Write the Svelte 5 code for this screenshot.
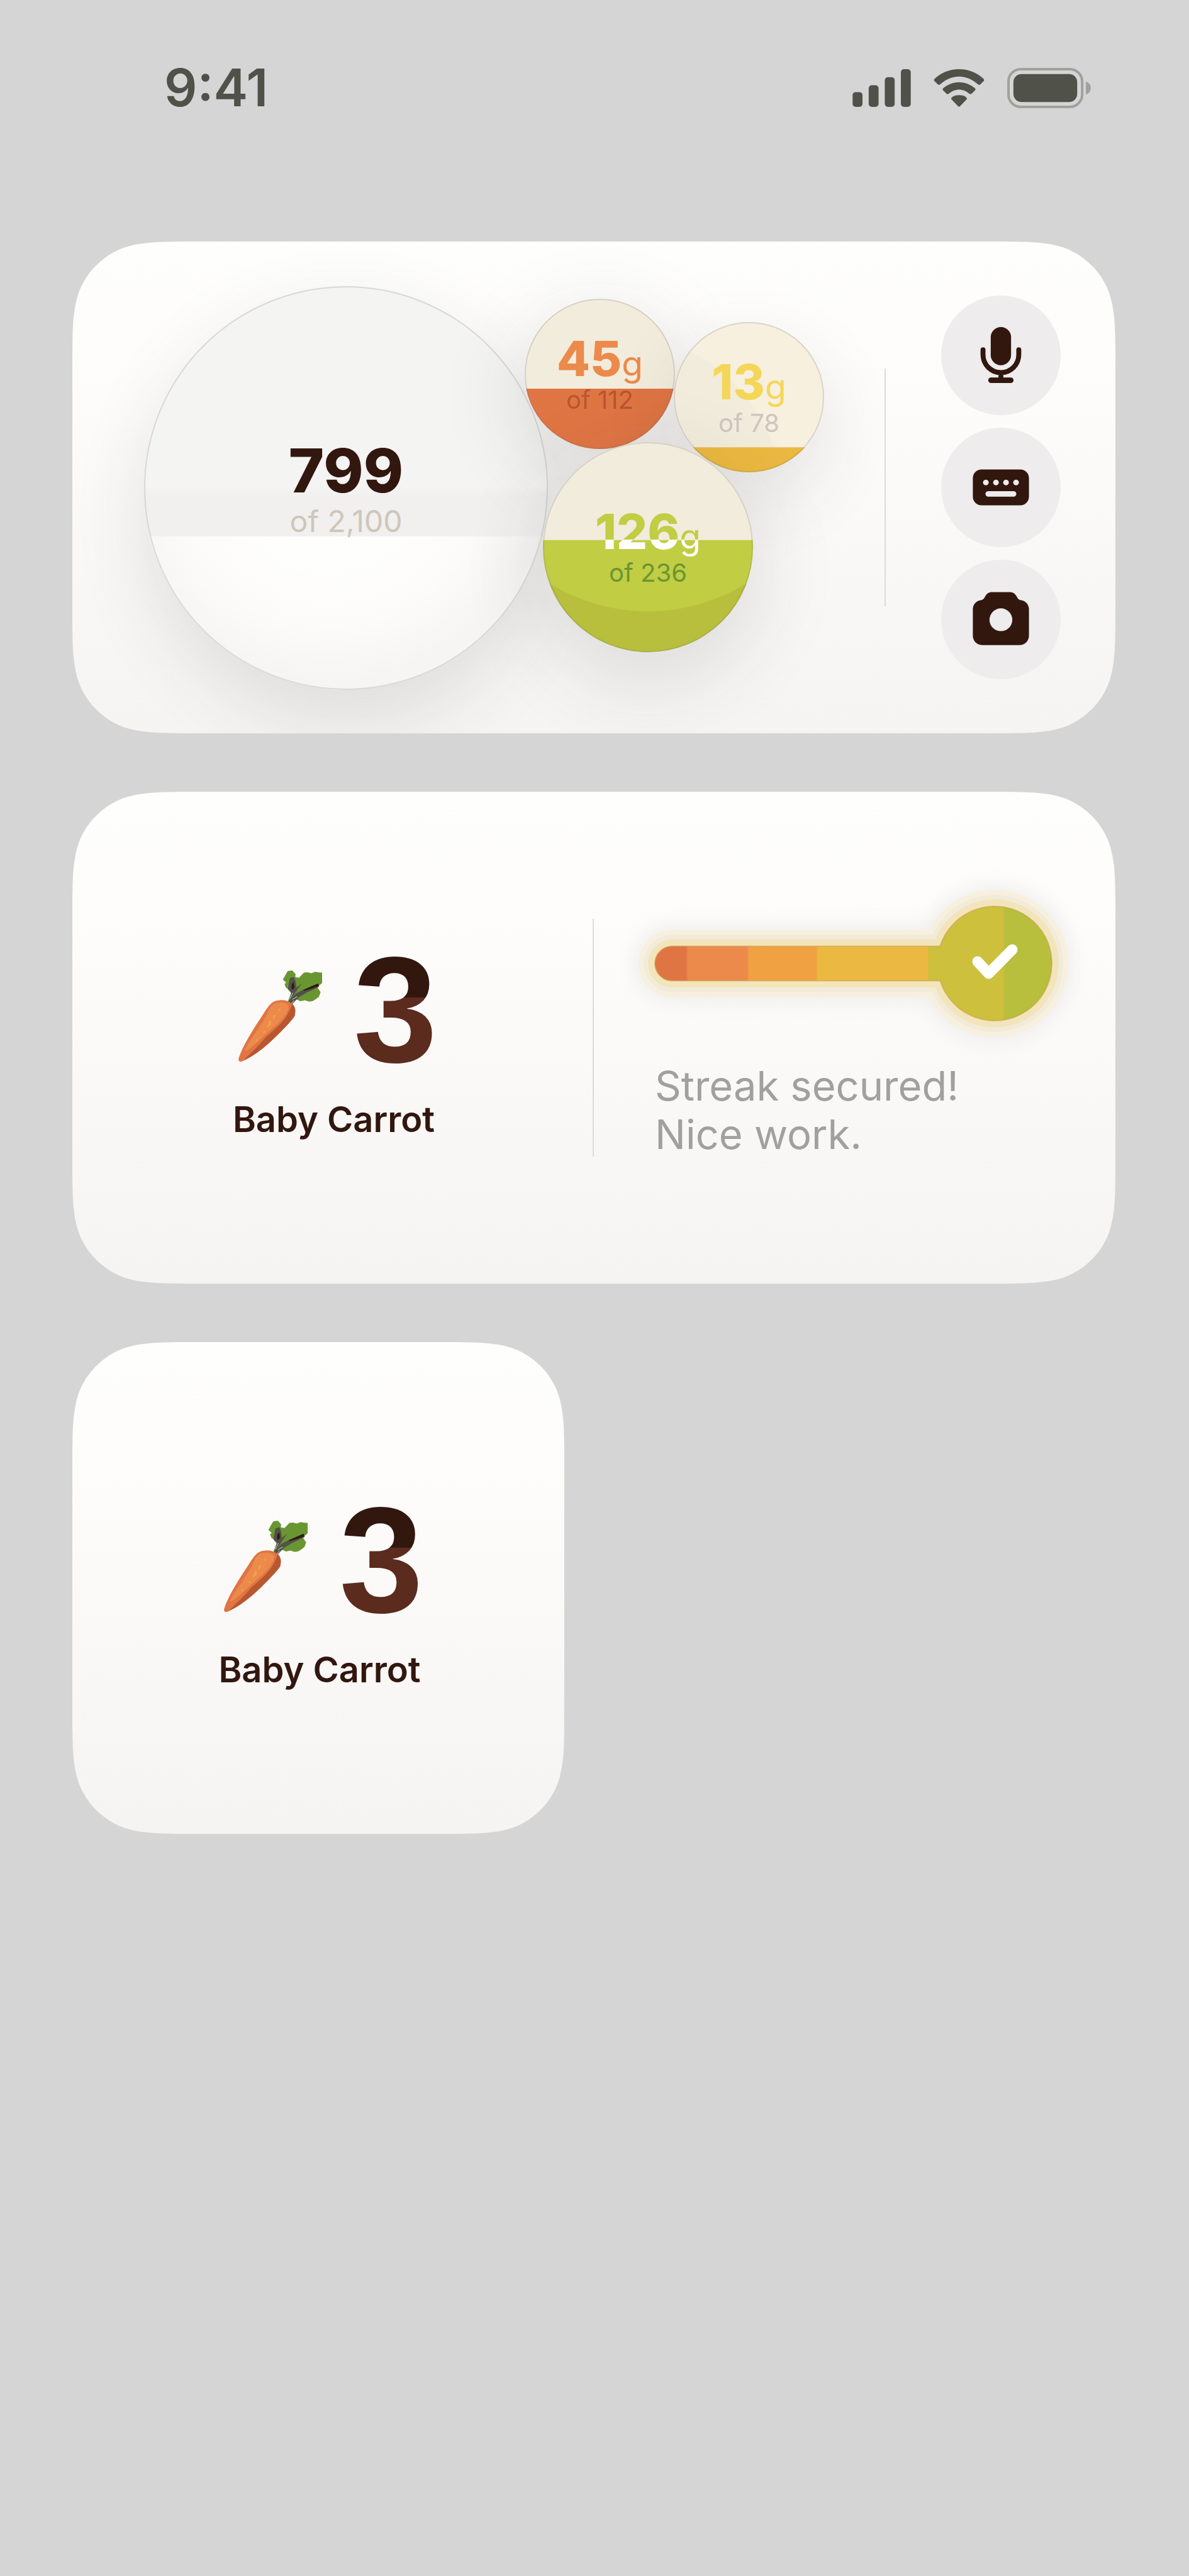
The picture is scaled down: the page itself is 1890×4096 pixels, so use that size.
<script>
	const bubbles = [
		{ name: 'calories', value: 799, goal: 2100, unit: '', x: 114, y: 71, size: 642 },
		{ name: 'protein', value: 45, goal: 112, unit: 'g', x: 719, y: 91, size: 239 },
		{ name: 'fat', value: 13, goal: 78, unit: 'g', x: 956, y: 128, size: 239 },
		{ name: 'carbs', value: 126, goal: 236, unit: 'g', x: 748, y: 319, size: 334 }
	];

	const streak = { count: 3, title: 'Baby Carrot' };

	// Continuous corner, as multiples of the radius measured from the corner itself
	const curves = [
		[[1.529, 0], [1.088, 0], [0.868, 0], [0.631, 0.075]],
		[[0.631, 0.075], [0.373, 0.169], [0.169, 0.373], [0.075, 0.631]],
		[[0.075, 0.631], [0, 0.868], [0, 1.088], [0, 1.529]]
	];

	function cornerPoints(radius) {
		const points = [];
		for (const [a, b, c, d] of curves) {
			for (let i = 0; i <= 12; i++) {
				const t = i / 12;
				const u = 1 - t;
				points.push(
					[0, 1].map((k) =>
						Math.round(
							radius * 10 *
								(u * u * u * a[k] + 3 * u * u * t * b[k] + 3 * u * t * t * c[k] + t * t * t * d[k])
						) / 10
					)
				);
			}
		}
		return points;
	}

	function squircle(radius) {
		const pts = cornerPoints(radius);
		const back = [...pts].reverse();
		const far = (n) => `calc(100% - ${n}px)`;
		return `polygon(${[
			...pts.map(([x, y]) => `${x}px ${y}px`),
			...back.map(([x, y]) => `${x}px ${far(y)}`),
			...pts.map(([x, y]) => `${far(x)} ${far(y)}`),
			...back.map(([x, y]) => `${far(x)} ${y}px`)
		].join(', ')})`;
	}

	const cardShape = squircle(130);
</script>

{#snippet streakBadge()}
	<div class="streak">
		<div class="streak-row">
			<svg class="carrot" viewBox="88 208 408 448" aria-hidden="true">
				<path d="M330 362l22-56-30-10-8-18 8-8-16-14 12-22 12-20 22-3 16 18-2 14 18 4 24-25 18-2 18 5 18-7 26 4 14-2 9 24-8 22-18 16-14 6 8 14 10 14-8 22-14 12-18 10-18 2-18-6-22 4-20-9-26 25z" fill="#6a9632" />
				<path d="M340 248l20-6 8 24 4 28 26-20-20 28-30 44-12 16 10-42-16-18z" fill="#50524a" />
				<path d="M332 364l36-40 34-18 32-12 42-14 6 10-58 28-42 24-36 38z" fill="#50524a" />
				<path d="M349 280l9-14 4 24-6 14-8-4zM404 306l40-18 32-14 6 12-32 12-42 12z" fill="#32170f" />
				<path d="M340 350l14-30M352 352l24-14M346 374l14-18" stroke="#d7d5cd" stroke-width="3" />
				<path d="M92 638C112 572 170 485 214 418C242 376 254 356 298 355C346 354 372 386 364 432C332 478 280 520 240 560C194 602 148 636 106 653Q88 655 92 638Z" fill="#e07544" />
				<path d="M350 372C378 396 364 430 358 440C310 498 240 566 202 594C166 622 138 638 116 646C156 606 196 570 218 540C270 494 334 446 350 372Z" fill="#b8572f" />
				<path d="M262 374C290 360 330 364 334 388C330 430 276 476 242 504C216 526 180 564 146 590C126 606 116 606 126 586C160 530 200 480 226 430C238 402 244 386 262 374Z" fill="#ec8a4b" />
				<path d="M284 400l14-8-8 18zM258 430l16-6-10 22-6 6zM238 456l12-2-2 22-22 14 10-20zM208 508l10-6 4 8-12 4zM174 548l14-8-8 16z" fill="#f0a243" />
			</svg>
			<span class="count">{streak.count}</span>
		</div>
		<p class="streak-title">{streak.title}</p>
	</div>
{/snippet}

<header class="status-bar">
	<time class="clock">9:41</time>
	<div class="status-icons">
		<svg width="93" height="60" viewBox="0 0 94 61" aria-hidden="true">
			<rect x="0" y="37" width="16" height="24" rx="5" />
			<rect x="26" y="26" width="16" height="35" rx="5" />
			<rect x="52" y="13" width="16" height="48" rx="5" />
			<rect x="78" y="0" width="16" height="61" rx="5" />
		</svg>
		<svg width="81" height="60" viewBox="0 0 82 61" aria-hidden="true">
			<path d="M41 0C57 0 71 6 81 16Q82 17.500 81 19L75 25Q74 26 72 25C63 17 53 12 41 12S19 17 10 25Q8 26 7 25L1 19Q0 17.500 1 16C11 6 25 0 41 0Z" />
			<path d="M41 21C51 21 60 25 67 31Q68 32.500 67 34L61 40Q59.500 41 58 40C52 35 47 33 41 33S30 35 24 40Q22.500 41 21 40L15 34Q14 32.500 15 31C22 25 31 21 41 21Z" />
			<path d="M41 42C46 42 50 43 53 46Q54.500 47.500 53 49L42.500 60Q41 61.500 39.500 60L29 49Q27.500 47.500 29 46C32 43 36 42 41 42Z" />
		</svg>
		<svg width="133" height="64" viewBox="0 0 135 65" aria-hidden="true">
			<rect class="battery-case" x="2" y="2" width="119" height="61" rx="20" />
			<rect x="10" y="10" width="103" height="45" rx="13" />
			<path class="battery-tip" d="M127 22Q135 25 135 32.500Q135 40 127 43Z" />
		</svg>
	</div>
</header>

<main>
	<section class="card" style:clip-path={cardShape}>
		<div class="chart">
			{#each bubbles as bubble}
				<div
					class="bubble {bubble.name}"
					style="left: {bubble.x}px; top: {bubble.y}px; width: {bubble.size}px; height: {bubble.size}px"
				>
					<div class="fill" style="clip-path: inset({100 - (bubble.value / bubble.goal) * 100}% 0 0 0)"></div>
					<div class="value">{bubble.value}{#if bubble.unit}<span class="unit">{bubble.unit}</span>{/if}</div>
					<div class="goal">of {bubble.goal.toLocaleString('en-US')}</div>
				</div>
			{/each}
		</div>
		<div class="divider"></div>
		<div class="actions">
			<button type="button" aria-label="Voice">
				<svg viewBox="0 0 100 100">
					<rect x="33.500" y="4" width="33" height="62" rx="16.500" />
					<path d="M21 41v8a29 29 0 0 0 58 0v-8M50 78v12" fill="none" stroke="#32170f" stroke-width="8" stroke-linecap="round" />
					<rect x="29.500" y="86" width="41" height="9" rx="4.500" />
				</svg>
			</button>
			<button type="button" aria-label="Keyboard">
				<svg viewBox="0 0 100 100">
					<rect x="4.500" y="21" width="91" height="58" rx="14" />
					<g fill="#eeecec">
						<circle cx="25.600" cy="42" r="4.600" />
						<circle cx="42" cy="42" r="4.600" />
						<circle cx="58.300" cy="42" r="4.600" />
						<circle cx="74.600" cy="42" r="4.600" />
						<rect x="25" y="56" width="50" height="9" rx="4.500" />
					</g>
				</svg>
			</button>
			<button type="button" aria-label="Camera">
				<svg viewBox="0 0 100 100">
					<path d="M36 5.500H64C70 5.500 73 8 75.500 12.500C77.500 16.500 79 18 82 18.500C90 19 95.500 26 95.500 33V76C95.500 85 89 91.500 80 91.500H20C11 91.500 4.500 85 4.500 76V33C4.500 26 10 19 18 18.500C21 18 22.500 16.500 24.500 12.500C27 8 30 5.500 36 5.500Z" />
					<circle cx="50" cy="50.500" r="18.500" fill="#eeecec" />
				</svg>
			</button>
		</div>
	</section>

	<section class="card" style:clip-path={cardShape}>
		{@render streakBadge()}
		<div class="divider"></div>
		<div class="progress">
			<svg class="meter" viewBox="0 0 631 182" role="img" aria-label="Streak progress">
				<defs>
					<linearGradient id="heat" gradientUnits="userSpaceOnUse" x1="0" y1="0" x2="631" y2="0">
						<stop offset="0.078" stop-color="#e07544" />
						<stop offset="0.084" stop-color="#ec8a4b" />
						<stop offset="0.232" stop-color="#ec8a4b" />
						<stop offset="0.238" stop-color="#f0a243" />
						<stop offset="0.406" stop-color="#f0a243" />
						<stop offset="0.412" stop-color="#ebb941" />
						<stop offset="0.685" stop-color="#ebb941" />
						<stop offset="0.691" stop-color="#cdc03c" />
						<stop offset="0.876" stop-color="#cdc03c" />
						<stop offset="0.882" stop-color="#b7bf3c" />
					</linearGradient>
					<path id="thermo" d="M27.500 63.500H453.300A91 91 0 1 1 453.300 118.500H27.500A27.500 27.500 0 0 1 27.500 63.500Z" stroke-linejoin="round" />
				</defs>
				<use class="glow-shade" href="#thermo" />
				<use href="#thermo" stroke="#f8f0de" stroke-width="52" />
				<use href="#thermo" stroke="#f2ebda" stroke-width="36" />
				<use href="#thermo" stroke="#f3e5bb" stroke-width="22" />
				<use href="#thermo" fill="url(#heat)" stroke="#c79a4a" stroke-opacity="0.5" stroke-width="2" />
				<path d="M513 88L530.500 107L568 69" fill="none" stroke="#fff" stroke-width="17" stroke-linecap="round" stroke-linejoin="round" />
			</svg>
			<p class="message">Streak secured!<br />Nice work.</p>
		</div>
	</section>

	<section class="card small" style:clip-path={cardShape}>
		{@render streakBadge()}
	</section>
</main>

<style>
	:global(body) {
		margin: 0;
		background: #d5d5d5;
		font-family: Inter, 'Liberation Sans', sans-serif;
		color: #32170f;
	}

	p {
		margin: 0;
	}

	.status-bar {
		display: flex;
		justify-content: space-between;
		align-items: center;
		padding: 92px 156px 196px 261px;
		color: #50524a;
	}

	.clock {
		font-size: 82px;
		line-height: 96px;
		font-weight: 600;
	}

	.status-icons {
		display: flex;
		align-items: center;
		gap: 36px;
		fill: #50524a;
	}

	.battery-case {
		fill: none;
		stroke: #a1a09c;
		stroke-width: 4;
	}

	.battery-tip {
		fill: #a1a09c;
	}

	main {
		display: flex;
		flex-direction: column;
		gap: 93px;
		padding: 0 117px 93px 115px;
	}

	.card {
		display: flex;
		align-items: center;
		height: 782px;
		background: linear-gradient(#fefefd, #fdfcfb 30%, #f5f4f2);
	}

	.card.small {
		width: 782px;
	}

	.divider {
		flex: none;
		width: 2px;
		height: 378px;
		background: #dcdbd9;
	}

	.chart {
		position: relative;
		flex: 1;
		align-self: stretch;
	}

	.bubble {
		position: absolute;
		display: flex;
		flex-direction: column;
		align-items: center;
		justify-content: center;
		box-sizing: border-box;
		padding-bottom: 10px;
		border-radius: 50%;
		background: #f2ecdc;
		box-shadow: 0 44px 120px rgba(50, 50, 50, 0.12);
	}

	/* Outline drawn over the fill */
	.bubble::after {
		content: '';
		position: absolute;
		inset: 0;
		border: 2px solid rgba(120, 120, 120, 0.22);
		border-radius: 50%;
	}

	.fill {
		position: absolute;
		inset: 0;
		border-radius: 50%;
	}

	.value {
		position: relative;
		font-size: 77px;
		line-height: 92px;
		font-weight: 800;
	}

	.unit {
		font-size: 55px;
		line-height: 0;
		font-weight: 400;
	}

	.goal {
		position: relative;
		font-size: 40px;
		line-height: 40px;
		color: #cdc6bf;
	}

	.calories {
		background: linear-gradient(#f4f4f2 50%, #f1f0ee 52%);
	}

	.calories .fill {
		background: radial-gradient(circle at 46% 46%, #fefefd 30%, #fcfbfa 50%, #f6f5f4 68%);
	}

	.calories .value {
		font-size: 96px;
		line-height: 116px;
	}

	.calories .goal {
		font-size: 48px;
		line-height: 46px;
		color: #cdc6bb;
	}

	.protein,
	.carbs {
		box-shadow: 0 36px 130px 10px rgba(50, 50, 50, 0.13);
	}

	.protein .fill {
		background: #e07544;
	}

	.protein .value {
		color: #ec8a4b;
	}

	.protein .goal {
		color: #b8572f;
	}

	.fat {
		background: radial-gradient(circle at -40% 120%, #f2ecdc 268px, #f7f0df 270px);
	}

	.fat .fill {
		background: #ebb941;
	}

	.fat .value {
		color: #f4d75a;
	}

	.carbs .fill {
		background: radial-gradient(circle at 50% -29px, #c1cd43 297px, #b7bf3c 299px);
	}

	.carbs .value {
		background: linear-gradient(#c1cd43 59px, #fff 59px);
		background-clip: text;
		-webkit-background-clip: text;
		color: transparent;
	}

	.carbs .goal {
		color: #6a9632;
	}

	.actions {
		display: flex;
		flex-direction: column;
		gap: 20px;
		margin: 0 87px 0 88px;
	}

	.actions button {
		display: grid;
		place-items: center;
		width: 190px;
		height: 190px;
		padding: 0;
		border: 0;
		border-radius: 50%;
		background: #eeecec;
		cursor: pointer;
	}

	.actions svg {
		width: 98px;
		height: 98px;
		fill: #32170f;
	}

	.streak {
		flex: 1;
		display: flex;
		flex-direction: column;
		align-items: center;
		gap: 54px;
		padding: 20px 0 0 4px;
	}

	.streak-row {
		display: flex;
		align-items: center;
		gap: 50px;
		padding-left: 12px;
	}

	.carrot {
		width: 134px;
		height: 147px;
		padding-top: 20px;
	}

	.count {
		font-family: 'Liberation Sans', Arial, sans-serif;
		font-size: 240px;
		line-height: 186px;
		font-weight: 700;
		background: linear-gradient(#32170f 40%, #5b2b1e 40%);
		background-clip: text;
		-webkit-background-clip: text;
		color: transparent;
	}

	.streak-title {
		font-size: 56px;
		line-height: 56px;
		font-weight: 600;
	}

	.progress {
		flex: none;
		display: flex;
		flex-direction: column;
		gap: 65px;
		box-sizing: border-box;
		width: 50%;
		padding: 0 101px 18px 97px;
	}

	.meter {
		width: 100%;
		overflow: visible;
	}

	.glow-shade {
		fill: none;
		stroke: #efedeb;
		stroke-width: 64px;
		filter: blur(14px);
	}

	.message {
		font-size: 65px;
		line-height: 77px;
		color: #a1a09c;
	}
</style>
